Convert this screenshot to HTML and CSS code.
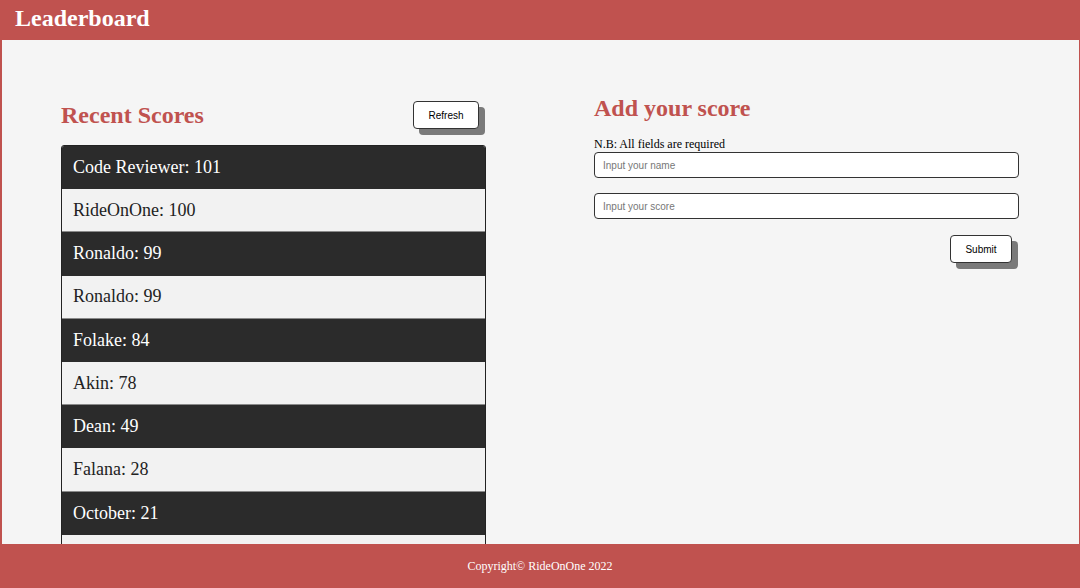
FILE: index.html
```html
<!DOCTYPE html>
<html lang="en">
<head>
<meta charset="utf-8">
<title>Leaderboard</title>
<link rel="stylesheet" href="styles.css">
</head>
<body>
<header class="topbar"><h1 class="brand">Leaderboard</h1></header>
<main class="content">
  <section class="scores">
    <div class="scores-head">
      <h2 class="title">Recent Scores</h2>
      <button class="btn" type="button">Refresh</button>
    </div>
    <ul class="score-list">
      <li class="row dark">Code Reviewer: 101</li>
      <li class="row light">RideOnOne: 100</li>
      <li class="row dark">Ronaldo: 99</li>
      <li class="row light">Ronaldo: 99</li>
      <li class="row dark">Folake: 84</li>
      <li class="row light">Akin: 78</li>
      <li class="row dark">Dean: 49</li>
      <li class="row light">Falana: 28</li>
      <li class="row dark">October: 21</li>
      <li class="row light">Tolu: 12</li>
    </ul>
  </section>
  <section class="add">
    <h2 class="title">Add your score</h2>
    <form class="form">
      <p class="note">N.B: All fields are required</p>
      <input class="field" type="text" placeholder="Input your name">
      <input class="field" type="text" placeholder="Input your score">
      <div class="actions"><button class="btn" type="button">Submit</button></div>
    </form>
  </section>
</main>
<footer class="footer">Copyright© RideOnOne 2022</footer>
</body>
</html>
```
FILE: styles.css
```css
* { box-sizing: border-box; }
html, body { margin: 0; padding: 0; }
body {
  font-family: "Liberation Serif", "Times New Roman", serif;
  background: #c0524f;
  height: 588px;
  overflow: hidden;
}
.topbar {
  height: 40px;
  background: #c0524f;
  display: flex;
  align-items: center;
  padding-left: 15px;
}
.brand {
  margin: 0;
  color: #fff;
  font-size: 24px;
  font-weight: bold;
  line-height: 1;
  margin-top: -4px;
}
.content {
  background: #f5f5f5;
  margin: 0 1px 0 2px;
  display: grid;
  grid-template-columns: 425px 425px;
  column-gap: 108px;
  padding: 0 60px 0 59px;
  height: 548px;
}
.scores { padding-top: 60px; }
.scores-head {
  display: flex;
  justify-content: space-between;
  align-items: center;
  height: 30px;
  margin-bottom: 15px;
}
.title {
  margin: 0;
  color: #c0524f;
  font-size: 24px;
  font-weight: bold;
  line-height: 30px;
}
.btn {
  font-family: "Liberation Sans", Arial, sans-serif;
  font-size: 10px;
  color: #000;
  background: #fff;
  border: 1px solid #333;
  border-radius: 4px;
  height: 28px;
  padding: 0;
  box-shadow: 6px 6px 0 #7a7a7a;
  margin-right: 7px;
}
.scores-head .btn { width: 66px; }
.score-list {
  list-style: none;
  margin: 0;
  padding: 0;
  border: 1px solid #222;
  border-radius: 3px 3px 0 0;
  overflow: hidden;
}
.row {
  height: 43.2px;
  display: flex;
  align-items: center;
  padding-left: 11px;
  font-size: 18px;
}
.dark { background: #2b2b2b; color: #fff; }
.light { background: #f2f2f2; color: #222; border-bottom: 1px solid #8a8a8a; }
.add { padding-top: 53px; }
.form { display: flex; flex-direction: column; }
.note {
  margin: 14px 0 0;
  font-size: 12px;
  line-height: 15px;
  color: #000;
}
.field {
  height: 26px;
  border: 1px solid #333;
  border-radius: 4px;
  background: #fff;
  padding: 0 8px;
  font-family: "Liberation Sans", Arial, sans-serif;
  font-size: 10px;
  margin-bottom: 15px;
}
.field::placeholder { color: #777; }
.actions { display: flex; justify-content: flex-end; margin-top: 1px; }
.actions .btn { width: 62px; }
.footer {
  position: fixed;
  left: 0;
  right: 0;
  bottom: 0;
  height: 44px;
  background: #c0524f;
  color: #fff;
  font-size: 12px;
  display: flex;
  align-items: center;
  justify-content: center;
}
```
